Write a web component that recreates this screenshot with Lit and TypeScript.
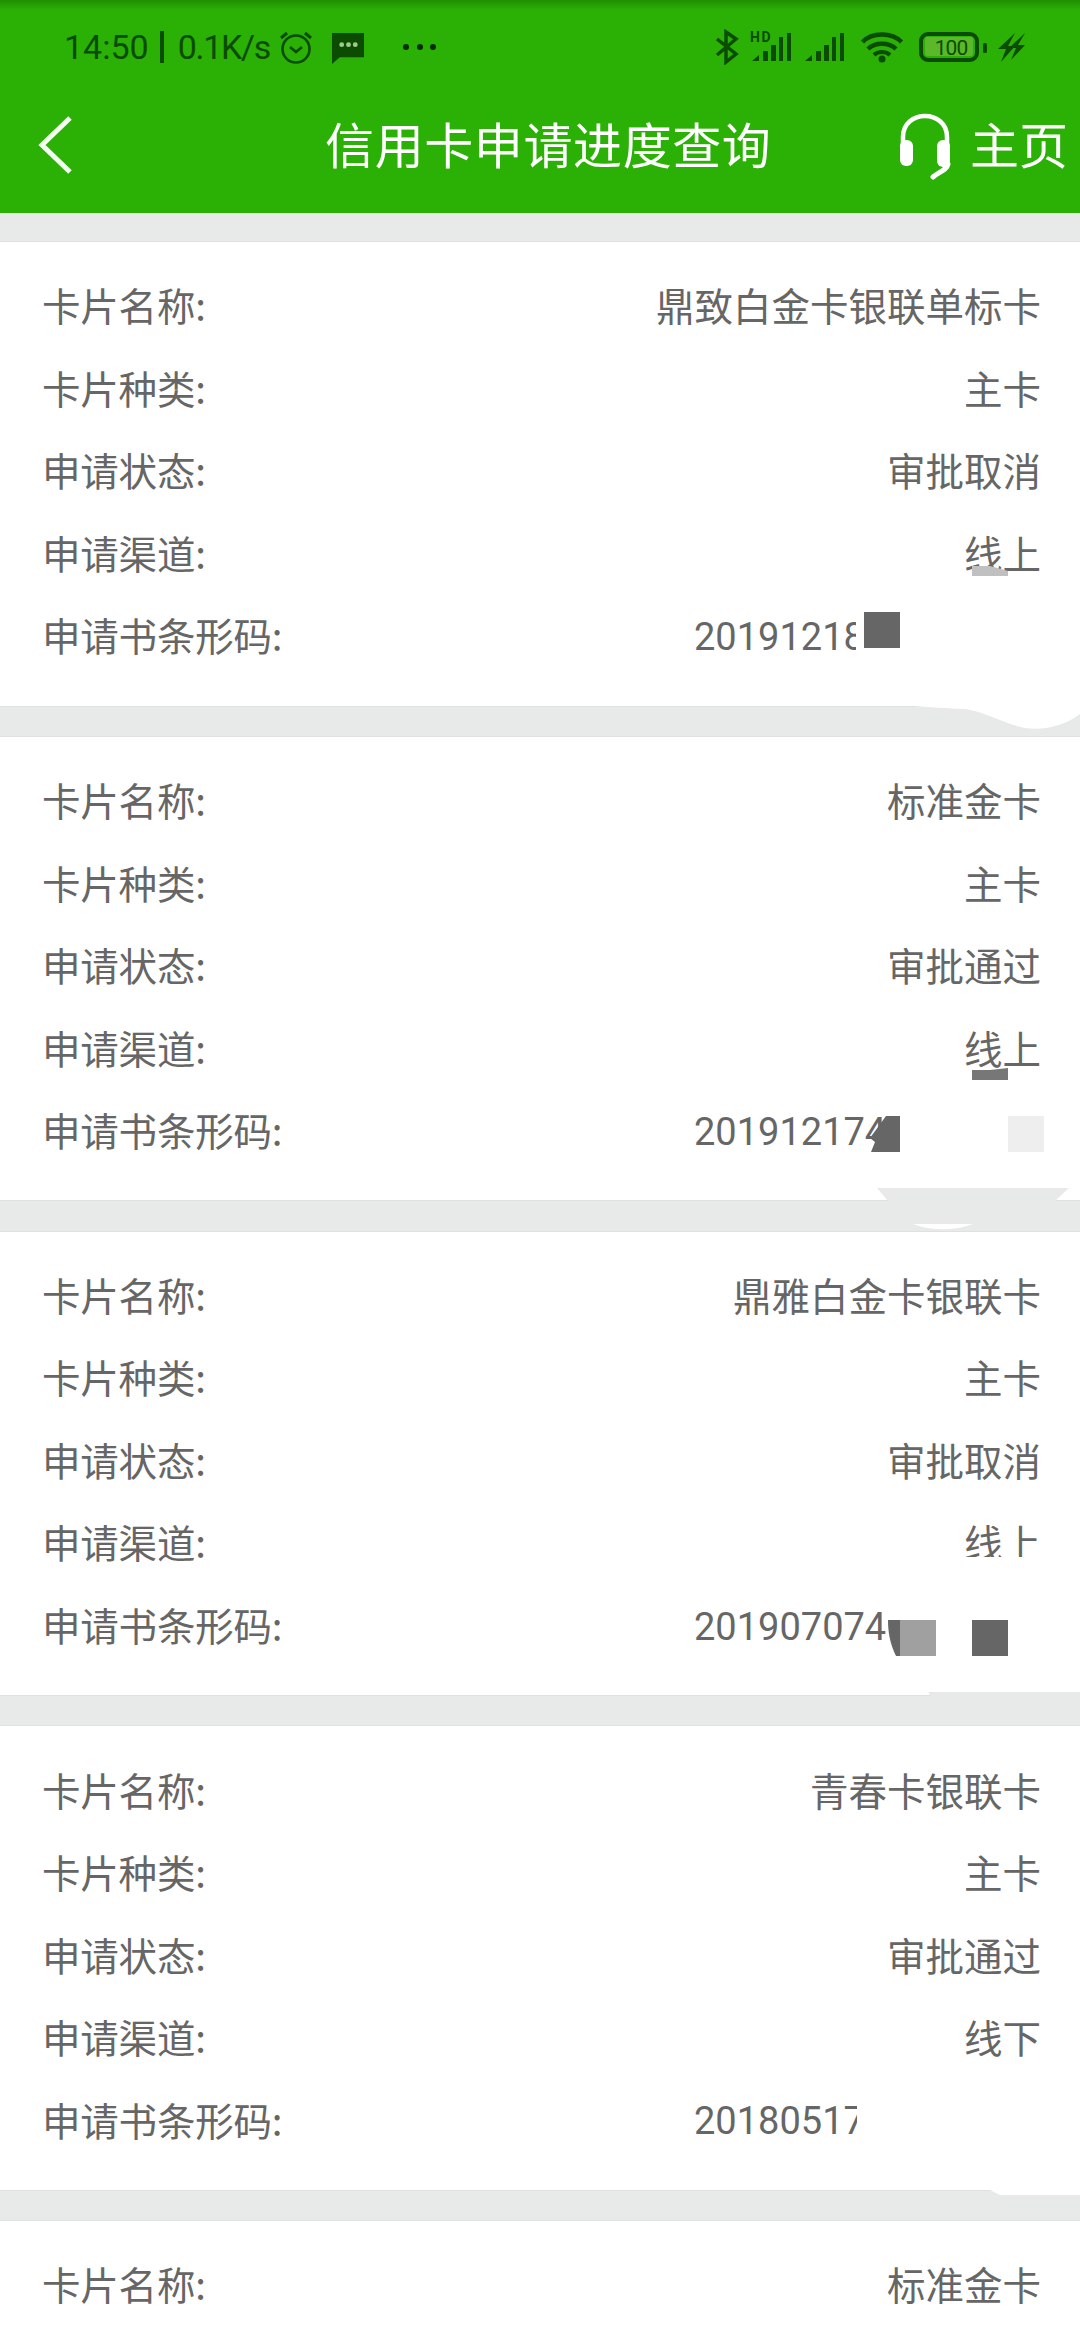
import { LitElement, html, css, svg } from "lit";
import { customElement } from "lit/decorators.js";

interface Card { name: string; kind: string; status: string; channel: string; code: string; clip: number; marks: unknown; }

const marks = [
  svg`<polygon class="light" points="972,324 990,324 1008,329 1008,334 972,334"/>
      <rect class="dark" x="864" y="370" width="36" height="36"/>
      <path class="white" d="M905 463 C930 466 950 466 965 467 C985 470 1005 482 1025 486 C1045 489 1065 483 1080 472 L1080 462 Z"/>`,
  svg`<polygon class="mid" points="972,333 990,333 1008,331 1008,343 972,343"/>
      <polygon class="dark" points="886,379 900,379 900,415 871,415 875,405 870,401"/>
      <rect class="pale" x="1008" y="379" width="36" height="36"/>
      <polygon class="gap" points="877,451 1069,451 1055,464 888,464"/>
      <path class="white" d="M913 487 C930 494 955 494 973 487 Z"/>`,
  svg`<rect class="white" x="960" y="325" width="80" height="12"/>
      <rect class="white" x="1003" y="300" width="4" height="26"/>
      <path class="dark" d="M888 388 L900 388 L900 424 L896 424 C890 412 888 400 888 388 Z"/>
      <rect class="soft" x="900" y="388" width="36" height="36"/>
      <rect class="dark" x="972" y="388" width="36" height="36"/>
      <polygon class="gap" points="928,460 1080,460 1080,470 935,470"/>`,
  svg`<polygon class="white" points="970,463 990,464 1000,469 1080,469 1080,463"/>`,
  svg``,
];

const cards: Card[] = [
  { name: "鼎致白金卡银联单标卡", kind: "主卡", status: "审批取消", channel: "线上", code: "20191218", clip: 162, marks: marks[0] },
  { name: "标准金卡", kind: "主卡", status: "审批通过", channel: "线上", code: "201912174", clip: 190, marks: marks[1] },
  { name: "鼎雅白金卡银联卡", kind: "主卡", status: "审批取消", channel: "线上", code: "201907074", clip: 194, marks: marks[2] },
  { name: "青春卡银联卡", kind: "主卡", status: "审批通过", channel: "线下", code: "20180517", clip: 163, marks: marks[3] },
  { name: "标准金卡", kind: "", status: "", channel: "", code: "", clip: 0, marks: marks[4] },
];

@customElement("app-root")
export class AppRoot extends LitElement {
  static styles = css`
    :host { display: block; width: 1080px; height: 2340px; overflow: hidden; background: #e8eaea;
      font-family: "Roboto", "Noto Sans CJK SC", sans-serif; }
    .top { height: 213px; background: linear-gradient(#1f8f00 0, #2bb005 10px, #2bb005 100%); color: #fff; }
    .status { height: 94px; display: flex; align-items: center; padding: 0 0 0 64px; color: #0c4c00; box-sizing: border-box; }
    .clock { font-size: 34px; font-weight: 400; white-space: nowrap; width: 210px; flex: none; display: flex; align-items: center; }
    .sep { width: 4px; height: 32px; background: #0c4c00; margin: 0 14px 0 11px; flex: none; }
    .speed { letter-spacing: -1.300px; }
    .alarm { margin-left: 4px; flex: none; }
    .msg { margin-left: 17px; flex: none; margin-top: 3px; }
    .dots { margin-left: 37px; flex: none; }
    .icons { margin-left: auto; margin-right: 50px; display: block; flex: none; }
    .nav { height: 119px; padding: 0 12px 18px 0; box-sizing: border-box; display: flex; align-items: center; }
    .back { margin-left: 37px; flex: none; }
    .title { flex: 1; text-align: center; font-size: 49px; letter-spacing: 0.6px; margin: 0 0 4px 124px; white-space: nowrap; font-family: "Noto Sans CJK SC", sans-serif; }
    .head { margin-right: 18.500px; flex: none; }
    .home { font-size: 49px; margin-bottom: 4px; font-family: "Noto Sans CJK SC", sans-serif; white-space: nowrap; }
    .list { padding-top: 29px; display: flex; flex-direction: column; gap: 31.200px; }
    .card { position: relative; background: #fff; height: 463.600px; padding: 24px 39px 0 42px; box-sizing: border-box;
      box-shadow: 0 0 0 1px #dfe1e1; color: #666; font-size: 38.500px; }
    .row { height: 82.500px; display: flex; align-items: center; justify-content: space-between; white-space: nowrap; }
    .label, .value { font-family: "Noto Sans CJK SC", sans-serif; margin-bottom: 6px; }
    .label { letter-spacing: -0.200px; }
    .code { position: absolute; left: 694px; font-size: 38px; line-height: 82.500px; height: 82.500px; }
    .marks { position: absolute; left: 0; top: 0; width: 1080px; height: 464px; overflow: visible; pointer-events: none; }
    .dark { fill: #666; } .mid { fill: #777; } .light { fill: #c0c0c0; } .soft { fill: #a0a0a0; }
    .pale { fill: #eee; } .white { fill: #fff; } .gap { fill: #e8eaea; }
  `;

  private row(label: string, value: string) {
    return html`<div class="row"><span class="label">${label}</span><span class="value">${value}</span></div>`;
  }

  private statusBar() {
    return html`<div class="status">
      <span class="clock">14:50<i class="sep"></i><span class="speed">0.1K/s</span></span>
      <svg class="alarm" width="36" height="36" viewBox="0 0 34 36" fill="none" stroke="#0c4c00">
        <circle cx="17" cy="20" r="13.500" stroke-width="2.600"/>
        <path d="M11 18l6 5 6-5" stroke-width="2.600"/>
        <path d="M2 9l6-5M32 9l-6-5" stroke-width="3"/>
      </svg>
      <svg class="msg" width="34" height="31" viewBox="0 0 33 32">
        <path fill="#0c4c00" d="M0 0H33V25H8L0 32Z"/>
        <g fill="#9fc98f"><circle cx="10" cy="12" r="2.500"/><circle cx="17" cy="12" r="2.500"/><circle cx="24" cy="12" r="2.500"/></g>
      </svg>
      <svg class="dots" width="36" height="8" viewBox="0 0 36 8" fill="#062b00">
        <circle cx="4" cy="4" r="3"/><circle cx="18" cy="4" r="3"/><circle cx="31" cy="4" r="3"/>
      </svg>
      <svg class="icons" width="330" height="36" viewBox="0 0 330 36" fill="#0c4c00">
        <path d="M17 10L36 25 26 33V3L36 10 17 26" fill="none" stroke="#0c4c00" stroke-width="3.500"/>
        <text x="50" y="13" font-size="14" font-weight="700" letter-spacing="1.500" font-family="Roboto">HD</text>
        <path d="M52 32l7-6v6zM63 22h5v10h-5zM71 16h5v16h-5zM79 8h4v24h-4zM87 4h4v28h-4z"/>
        <path d="M105 32l7-6v6zM116 22h5v10h-5zM124 16h5v16h-5zM132 8h4v24h-4zM140 4h4v28h-4z"/>
        <path d="M162.500 13C172 3 192 3 201.500 13" fill="none" stroke="#0c4c00" stroke-width="4.500"/>
        <path d="M168 20C175 13 189 13 196 20" fill="none" stroke="#0c4c00" stroke-width="4.500"/>
        <path d="M174 26C178 22 186 22 190 26" fill="none" stroke="#0c4c00" stroke-width="4"/>
        <circle cx="182" cy="30" r="3.500"/>
        <rect x="221" y="5" width="56" height="26" rx="7" fill="none" stroke="#0c4c00" stroke-width="4"/>
        <rect x="225" y="8" width="48" height="19" rx="2" fill="#5ab82a"/>
        <text x="251" y="26" text-anchor="middle" font-size="21" letter-spacing="-1" font-family="Roboto">100</text>
        <rect x="283" y="14" width="4" height="10" rx="1.500"/>
        <path d="M315 4L298 20h8l-5 13 14-16h-7zM325 4L309 19h7l-5 12 14-15h-7z"/>
      </svg>
    </div>`;
  }

  render() {
    return html`
      <div class="top">
        ${this.statusBar()}
        <div class="nav">
          <svg class="back" width="36" height="60" viewBox="0 0 36 60" fill="none" stroke="#f4fff0" stroke-width="5">
            <path d="M33 3L5 30l28 27"/>
          </svg>
          <div class="title">信用卡申请进度查询</div>
          <svg class="head" width="52" height="68" viewBox="0 0 52 68" style="margin-top:2px" fill="none">
            <path d="M4 40V25C4 -3 48 -3 48 25V46" stroke="#fff" stroke-width="4.500"/>
            <rect x="1" y="28" width="13" height="26" rx="6" fill="#fff"/>
            <rect x="38" y="28" width="13" height="27" rx="6" fill="#fff"/>
            <path d="M49 52C48 58 40 60 34 65" stroke="#fff" stroke-width="5" stroke-linecap="round"/>
          </svg>
          <div class="home">主页</div>
        </div>
      </div>
      <div class="list">
        ${cards.map((c) => html`<div class="card">
          ${this.row("卡片名称:", c.name)}
          ${c.code ? html`
            ${this.row("卡片种类:", c.kind)}
            ${this.row("申请状态:", c.status)}
            ${this.row("申请渠道:", c.channel)}
            <div class="row"><span class="label">申请书条形码:</span>
              <span class="code">${c.code}</span></div>
            <svg class="marks" viewBox="0 0 1080 464">
              <rect class="white" x=${694 + c.clip} y="352" width="44" height="84"/>
              ${c.marks}
            </svg>` : ""}
        </div>`)}
      </div>
    `;
  }
}
